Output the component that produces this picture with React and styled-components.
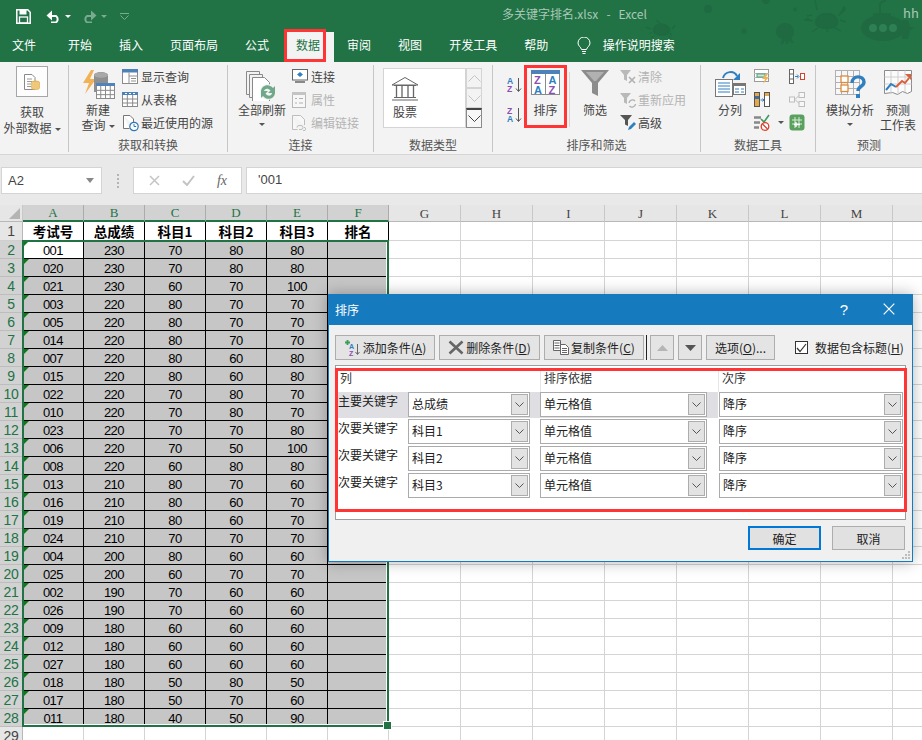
import React from "react";
import styled, { createGlobalStyle } from "styled-components";

const GREEN = "#217346";
const CJK = '"Noto Sans CJK SC", "Liberation Sans", sans-serif';

const Global = createGlobalStyle`
  html, body { margin: 0; padding: 0; background: #fff; }
  body { width: 922px; height: 740px; overflow: hidden; font-family: ${CJK}; font-size: 12px; color: #444; }
  * { box-sizing: border-box; }
`;

const Page = styled.div`position: relative; width: 922px; height: 740px; overflow: hidden;`;

/* ---------- header ---------- */
const Header = styled.header`position: relative; background: ${GREEN}; height: 62px; overflow: hidden;`;
const Critters = styled.svg`position: absolute; left: 640px; top: 0; pointer-events: none;`;
const TitleRow = styled.div`position: relative; height: 32px; display: flex; align-items: center; padding-left: 16px;`;
const QuickIcon = styled.svg`display: block; flex: none; margin-right: ${p => p.$mr || 0}px; opacity: ${p => p.$faded ? 0.4 : 1};`;
const DocTitle = styled.div`
  position: absolute; left: 502px; top: 6px; color: #a9c8b6; font-size: 12px; line-height: 16px; white-space: pre;
`;
const UserName = styled.div`position: absolute; left: 903px; top: 5px; color: #a9c8b6; font-size: 13px; line-height: 16px;`;
const TabRow = styled.nav`position: relative; height: 30px; display: flex; padding-left: 5px;`;
const Tab = styled.div`
  padding: 4px 13.5px 0; height: 30px; line-height: 18px; font-size: 12px; color: #fff; white-space: nowrap;
  flex: none;
  ${p => p.$first && "margin-left: -6.5px; margin-right: 5px; padding-left: 13.5px;"}
  ${p => p.$active && `background: #f3f3f3; color: ${GREEN}; margin-left: 4.5px; padding-left: 9px;`}
`;
const SearchTab = styled(Tab)`padding: 4px 0 0;`;
const Bulb = styled.svg`flex: none; margin: 5px 12px 0 15px;`;

/* ---------- ribbon ---------- */
const Ribbon = styled.section`
  display: flex; height: 93px; padding: 3px 0 2px; background: #f3f3f3; border-bottom: 1px solid #d6d6d6;
`;
const Group = styled.div`
  flex: none; width: ${p => p.$w}px; height: 87px; display: flex; flex-direction: column;
  border-right: ${p => p.$last ? "none" : "1px solid #c6c6c6"};
`;
const GroupBody = styled.div`flex: 1; display: flex; min-height: 0; padding-left: ${p => p.$pl || 0}px;`;
const GroupLabel = styled.div`height: 15px; line-height: 15px; font-size: 12px; text-align: center; color: #555;`;
const Big = styled.div`
  flex: none; width: ${p => p.$w}px; margin-left: ${p => p.$ml || 0}px; padding-top: 5px;
  display: flex; flex-direction: column; align-items: center;
`;
const BigIcon = styled.div`height: ${p => p.$h || 32}px; display: flex; justify-content: center; align-items: flex-start;`;
const BigText = styled.div`line-height: ${p => p.$lh || 15}px; margin-top: ${p => p.$mt || 0}px; font-size: 12px; text-align: center; white-space: nowrap; color: #444;`;
const ImportBox = styled.div`
  width: 32px; height: 31px; margin-top: -4px; margin-bottom: 2px; background: #fdfdfd; border: 1px solid #a6a6a6;
  display: flex; align-items: center; justify-content: center;
`;
const Stack = styled.div`flex: none; margin-left: ${p => p.$ml || 0}px; width: ${p => p.$w ? p.$w + "px" : "auto"}; display: flex; flex-direction: column;`;
const Small = styled.div`
  height: 23px; display: flex; align-items: center; gap: ${p => p.$gap ?? 3}px; font-size: 12px; white-space: nowrap;
  color: ${p => p.$off ? "#b3b3b3" : "#444"};
`;
const Caret = styled.span`
  display: inline-block; width: 0; height: 0; border: 3px solid transparent; border-top: 3px solid ${p => p.$c || "#555"}; border-bottom: 0;
  margin-left: ${p => p.$ml ?? 3}px; margin-right: ${p => p.$mr || 0}px; vertical-align: middle;
`;
const NameCaret = styled.span`display: block; width: 0; height: 0; border-style: solid; border-width: 5px 4px 0; border-color: #888 transparent transparent;`;
const CaretLine = styled.div`height: 15px; display: flex; align-items: center; justify-content: center;`;
const Gallery = styled.div`
  flex: none; width: 83px; height: 60px; margin-top: 3px; background: #fff; border: 1px solid #d4d4d4;
  padding: 8px 0 0 7px; display: flex; flex-direction: column; color: #444; line-height: 16px;
`;
const GalleryText = styled.span`margin: 3px 0 0 2px;`;
const ScrollCol = styled.div`flex: none; width: 16px; height: 60px; margin-top: 3px; display: flex; flex-direction: column; gap: 0;`;
const ScrollBtn = styled.div`
  flex: none; height: 20px; border: 1px solid ${p => p.$dark ? "#8a8a8a" : "#d4d4d4"};
  display: flex; align-items: center; justify-content: center; background: ${p => p.$dark ? "#f7f7f7" : "#f3f3f3"};
  ${p => p.$dark && "border-top: 2px solid #444;"}
`;
const SortStack = styled.div`flex: none; width: 20px; padding-top: 4px; display: flex; flex-direction: column;`;
const SortItem = styled.div`height: 30px; display: flex; align-items: center; justify-content: center;`;
const VSep = styled.div`flex: none; width: 1px; height: 55px; margin: 7px 5px 0 2px; background: #d6d6d6;`;
const IconRow = styled.div`height: 23px; display: flex; align-items: center;`;

/* ---------- formula bar ---------- */
const FormulaBar = styled.section`height: 50px; background: #e9e9e9; padding: 12px 0 0 1px; display: flex; align-items: flex-start;`;
const NameBox = styled.div`
  flex: none; width: 101px; height: 27px; background: #fff; border: 1px solid #d4d4d4; display: flex; align-items: center;
  justify-content: space-between; padding: 0 7px 0 6px; font: 13px "Liberation Sans", sans-serif; color: #444;
`;
const Dots = styled.div`flex: none; width: 31px; height: 27px; display: flex; flex-direction: column; align-items: center; justify-content: center; gap: 2px;`;
const Dot = styled.i`display: block; width: 2px; height: 2px; background: #b4b4b4;`;
const FxBox = styled.div`
  flex: none; width: 109px; height: 27px; background: #fff; border: 1px solid #d4d4d4; margin-right: 4px;
  display: flex; align-items: center; justify-content: space-around; padding: 0 3px 0 4px; color: #bdbdbd;
`;
const FxLabel = styled.span`font: italic 14px "Liberation Serif", serif; color: #666;`;
const FormulaInput = styled.div`
  flex: 1; height: 27px; background: #fff; border: 1px solid #d4d4d4; border-right: 0; padding-left: 11px;
  font: 13px/24px "Liberation Sans", sans-serif; color: #444;
`;

/* ---------- sheet ---------- */
const Sheet = styled.section`
  position: relative; height: 535px; overflow: hidden; display: grid;
  grid-template-columns: 23px repeat(6, 61px) repeat(8, 72px);
  grid-template-rows: 17px 19px repeat(28, 18px);
`;
const Corner = styled.div`background: #e6e6e6; border-right: 1px solid #c8c8c8; border-bottom: 1px solid #b8b8b8; position: relative; overflow: hidden;`;
const CornerMark = styled.svg`display: block; position: absolute; right: 2px; bottom: 2px;`;
const ColHead = styled.div`
  display: flex; align-items: center; justify-content: center; font: 13px "Liberation Serif", serif; padding-top: 1px;
  background: ${p => p.$sel ? "#d2d2d2" : "#e6e6e6"}; color: ${p => p.$sel ? GREEN : "#444"};
  border-right: 1px solid ${p => p.$sel ? "#ababab" : "#c8c8c8"};
  border-bottom: ${p => p.$sel ? `2px solid ${GREEN}` : "1px solid #b8b8b8"};
`;
const RowHead = styled.div`
  display: flex; align-items: center; justify-content: center; font: 14px "Liberation Sans", sans-serif; letter-spacing: -0.3px;
  background: ${p => p.$sel ? "#d2d2d2" : "#e6e6e6"}; color: ${p => p.$sel ? GREEN : "#444"};
  border-right: 1px solid #b8b8b8; border-bottom: 1px solid ${p => p.$sel ? "#bdbdbd" : "#cfcfcf"};
`;
const TitleCell = styled.div`
  background: #fff; color: #000; border-right: 1px solid #000; border-bottom: 1px solid #000;
  display: flex; align-items: center; justify-content: center; font-size: 13.5px; font-weight: 700; overflow: hidden;
`;
const DataCell = styled.div`
  position: relative; background: ${p => p.$active ? "#fff" : "#c6c6c6"}; color: #000;
  border-right: 1px solid #000; border-bottom: 1px solid #000; padding-top: 1px;
  display: flex; align-items: center; justify-content: center;
  font: 13px "Liberation Sans", sans-serif; letter-spacing: -0.5px;
  ${p => p.$flag && `&::before { content: ""; position: absolute; left: 0; top: 0; border-style: solid; border-width: 6px 6px 0 0; border-color: #0d7a1a transparent transparent transparent; }`}
`;
const EmptyCell = styled.div`background: #fff; border-right: 1px solid #d4d4d4; border-bottom: 1px solid #d4d4d4;`;
const Selection = styled.div`
  position: absolute; left: 22px; top: 35px; width: 367px; height: 487px; border: 2px solid ${GREEN};
  box-shadow: inset -1px 0 0 #fff, inset 0 -1px 0 #fff;
  pointer-events: none;
  &::after { content: ""; position: absolute; right: -5px; bottom: -5px; width: 7px; height: 7px; background: ${GREEN}; border: 1px solid #fff; }
`;

/* ---------- dialog ---------- */
const Dialog = styled.div`
  position: absolute; left: 328px; top: 294px; width: 585px; height: 268px; background: #f0f0f0;
  border: 1px solid #167abf; box-shadow: 0 0 14px rgba(0,0,0,.3); display: flex; flex-direction: column; color: #222;
`;
const DialogTitle = styled.div`
  flex: none; height: 30px; background: #167abf; color: #fff; display: flex; align-items: center; padding: 0 17px 2px 6px; font-size: 12px;
`;
const TitleText = styled.span`flex: 1;`;
const HelpMark = styled.span`font: 15px "Liberation Sans", sans-serif; margin-right: 35px;`;
const Toolbar = styled.div`flex: none; display: flex; align-items: center; margin: 10px 0 0 6px; height: 25px;`;
const ToolBtn = styled.div`
  flex: none; width: ${p => p.$w}px; height: 25px; margin-right: ${p => p.$mr ?? 4}px; border: 1px solid #adadad; background: #e4e4e4;
  display: flex; align-items: center; justify-content: center; gap: 2px; font-size: 12px; color: #222; white-space: nowrap;
  u { text-underline-offset: 1px; }
`;
const ToolDivider = styled.div`flex: none; width: 1px; height: 25px; background: #222; margin: 0 3px 0 -2px;`;
const CheckBox = styled.div`
  flex: none; width: 13px; height: 13px; margin: 0 7px 0 20px; background: #fff; border: 1px solid #333; display: flex; align-items: center; justify-content: center;
`;
const CheckLabel = styled.div`font-size: 12px; color: #222; white-space: nowrap; u { text-underline-offset: 1px; }`;
const ListBox = styled.div`
  flex: none; width: 571px; height: 155px; margin: 5px 0 0 6px; background: #fff; border: 1px solid #9a9ea2; display: flex; flex-direction: column;
`;
const ListHead = styled.div`flex: none; height: 26px; display: grid; grid-template-columns: 204px 178px 1fr; padding-top: 2px;`;
const HeadCell = styled.div`
  padding-left: ${p => p.$pl || 3}px; line-height: 20px; font-size: 12px; color: #333;
  border-left: ${p => p.$line ? "1px solid #e6e6e6" : "none"};
`;
const ListRow = styled.div`flex: none; height: 27px; display: flex;`;
const RowMain = styled.div`flex: none; width: 382px; height: 26px; display: flex; background: ${p => p.$sel ? "#dfdfe3" : "transparent"};`;
const KeyLabel = styled.div`flex: none; width: 72px; padding-left: 2px; line-height: 18px; font-size: 12px; color: #222; white-space: nowrap;`;
const Combo = styled.div`
  flex: none; width: ${p => p.$w}px; height: 25px; margin-left: ${p => p.$ml || 0}px; background: #fff; border: 1px solid #ababab;
  display: flex; align-items: center; justify-content: space-between; padding: 1px 1px 1px 3px; font-size: 12px; color: #222;
`;
const ComboText = styled.span`margin-bottom: 3px;`;
const ComboBtn = styled.div`
  flex: none; width: 17px; height: 21px; border: 1px solid #adadad; background: #e3e3e3; display: flex; align-items: center; justify-content: center;
`;
const Footer = styled.div`flex: none; display: flex; justify-content: flex-end; gap: 11px; margin-top: 6px; padding-right: 7px;`;
const FootBtn = styled.div`
  width: ${p => p.$w}px; height: 24px; background: #e1e1e1; border: ${p => p.$primary ? "2px solid #0078d7" : "1px solid #adadad"};
  display: flex; align-items: center; justify-content: center; font-size: 12px; color: #222;
`;
const Grip = styled.svg`position: absolute; right: 1px; bottom: 1px;`;
const RedBox = styled.div`
  position: absolute; left: ${p => p.$x}px; top: ${p => p.$y}px; width: ${p => p.$w}px; height: ${p => p.$h}px;
  border: 3px solid #ff3535; pointer-events: none;
`;
const RawIcon = styled.svg`display: block; flex: none;`;

/* ---------- icons ---------- */
const Svg = ({ w = 16, h = 16, children }) => <RawIcon width={w} height={h} viewBox={`0 0 ${w} ${h}`}>{children}</RawIcon>;

const MiniTable = ({ x = 0, y = 0, w = 16, h = 14, c = 4, r = 3, head = "#4d82b8", grid = "#8a8a8a" }) => {
  const lines = [];
  for (let i = 1; i < c; i++) lines.push(<path key={"c" + i} d={`M${x + (w * i) / c} ${y + 3}V${y + h}`} stroke={grid} fill="none" />);
  for (let i = 1; i < r; i++) lines.push(<path key={"r" + i} d={`M${x} ${y + 3 + ((h - 3) * i) / r}H${x + w}`} stroke={grid} fill="none" />);
  return (
    <g>
      <rect x={x + 0.5} y={y + 0.5} width={w - 1} height={h - 1} fill="#fff" stroke={grid} />
      {lines}
      <rect x={x} y={y} width={w} height={3} fill={head} />
    </g>
  );
};

const ImportIcon = () => (
  <Svg w={18} h={18}>
    <path d="M1.5 1.5H9l3 3V16.5H1.5Z" fill="#fff" stroke="#8a8a8a" />
    <path d="M4 6h5M4 8.5h5M4 11h4M4 13.5h4" stroke="#9a9a9a" />
    <ellipse cx="12.5" cy="9" rx="4" ry="1.6" fill="#e2b560" />
    <path d="M8.5 9v6c0 1 1.8 1.6 4 1.6s4-.6 4-1.6V9" fill="#f0c879" stroke="#d9a94a" strokeWidth=".6" />
  </Svg>
);
const NewQueryIcon = () => (
  <Svg w={33} h={32}>
    <path d="M9 0 1 13h6l-4 11L14 9H8l4-9Z" fill="#f2b155" />
    <path d="M12 6c0-3 4-4 7-4s7 1 7 4v16H12Z" fill="#8f8f8f" />
    <ellipse cx="19" cy="5" rx="7" ry="2.7" fill="#a8a8a8" />
    <MiniTable x={14} y={13} w={19} h={16} c={4} r={3} head="#4f84ba" />
  </Svg>
);
const QueryIcon = () => (
  <Svg w={16} h={15}><rect x=".5" y=".5" width="15" height="14" fill="#fff" stroke="#8a8a8a" /><rect width="16" height="3.5" fill="#4d82b8" /><path d="M7 3.5V15M7 7h9M9 9.5h5M9 12h5" stroke="#8f8f8f" fill="none" /></Svg>
);
const TableIcon = () => (
  <Svg w={16} h={15}><MiniTable w={16} h={15} c={3} r={3} /><path d="M3 1.5h2M7 1.5h2M11 1.5h2" stroke="#fff" /></Svg>
);
const RecentIcon = () => (
  <Svg w={18} h={18}>
    <path d="M1.5 1.5H8l3.5 3.5v6M1.5 1.5v13h6" fill="#fff" stroke="#777" />
    <circle cx="12" cy="12.5" r="4.2" fill="#fff" stroke="#2d76b5" strokeWidth="1.2" />
    <path d="M12 10v2.5h2.2" stroke="#2d76b5" fill="none" />
  </Svg>
);
const RefreshIcon = () => (
  <Svg w={34} h={31}>
    <path d="M1.5 1.5h13v23h-13z" fill="#f3f3f3" stroke="#8a8a8a" />
    <path d="M4.5 4.5h13v23h-13z" fill="#f3f3f3" stroke="#8a8a8a" />
    <path d="M7.5 7.5h12l5 5v19h-17z" fill="#fff" stroke="#8a8a8a" />
    <circle cx="23" cy="22" r="8" fill="#f3f3f3" />
    <path d="M16 21c.5-6 8-8 12-3l2-2v7h-7l2.500-2.500C23 17.500 19.500 18.500 19 21ZM30 23c-.5 6-8 8-12 3l-2 2v-7h7l-2.500 2.500C23 27 26.500 26 27 23Z" fill="#6fa98a" />
  </Svg>
);
const ConnIcon = () => (
  <Svg w={16} h={15}>
    <rect x=".5" y=".5" width="15" height="10.500" fill="#fff" stroke="#666" />
    <path d="M8 3l3 2.500L8 8 5 5.500Z" fill="#2f7fc1" />
    <path d="M3 13h10" stroke="#666" strokeWidth="1.500" />
  </Svg>
);
const PropIcon = () => (
  <Svg w={14} h={16}><rect x=".5" y=".5" width="13" height="15" fill="#f7f7f7" stroke="#b8b8b8" /><rect width="14" height="3" fill="#c4c4c4" /><path d="M3 6.500h2M3 11h2M7 6.500h4M7 11h4" stroke="#b0b0b0" fill="none" /></Svg>
);
const LinkIcon = () => (
  <Svg w={14} h={16}><path d="M.5.5h8l4 4V10M.5.5v14h5" fill="#f7f7f7" stroke="#bdbdbd" /><path d="M5 12.500a2 2 0 0 1 2-2h2a2 2 0 0 1 0 4H7M12 12.500h1a2 2 0 0 1 0 3h-2" stroke="#bdbdbd" fill="none" /></Svg>
);
const BankIcon = () => (
  <Svg w={28} h={24}>
    <path d="M14 .500 27 8H1Z" fill="none" stroke="#666" />
    <path d="M3 8.500h22M3 20.500h22M1 23h26" stroke="#666" strokeWidth="1.200" />
    <path d="M5.500 9v11M11 9v11M17 9v11M22.500 9v11" stroke="#666" strokeWidth="1.300" />
  </Svg>
);
const Chev = ({ up, c = "#c4c4c4" }) => (
  <RawIcon width="13" height="7" viewBox="0 0 13 7">
    <path d={up ? "M.5 6.500 6.500.5l6 6" : "M.5.500l6 6 6-6"} fill="none" stroke={c} />
  </RawIcon>
);
const SortAZ = ({ flip }) => (
  <Svg w={15} h={17}>
    <text x="0" y="7.500" fontFamily="Liberation Sans" fontWeight="700" fontSize="8.500" fill={flip ? "#8a4db0" : "#2f7fc1"}>{flip ? "Z" : "A"}</text>
    <text x="0" y="16" fontFamily="Liberation Sans" fontWeight="700" fontSize="8.500" fill={flip ? "#2f7fc1" : "#8a4db0"}>{flip ? "A" : "Z"}</text>
    <path d="M11.500 2v13M9 12.500l2.500 3 2.500-3" stroke="#555" fill="none" />
  </Svg>
);
const SortBigIcon = () => (
  <Svg w={29} h={25}>
    <rect x=".5" y=".5" width="28" height="24" fill="#fff" stroke="#8a8a8a" />
    <rect width="29" height="4" fill="#4d82b8" />
    <path d="M14.500 4v21" stroke="#8a8a8a" />
    <text x="3" y="14" fontFamily="Liberation Sans" fontWeight="700" fontSize="11" fill="#8a4db0">Z</text>
    <text x="3" y="23.500" fontFamily="Liberation Sans" fontWeight="700" fontSize="11" fill="#2f7fc1">A</text>
    <text x="17.500" y="14" fontFamily="Liberation Sans" fontWeight="700" fontSize="11" fill="#2f7fc1">A</text>
    <text x="17.500" y="23.500" fontFamily="Liberation Sans" fontWeight="700" fontSize="11" fill="#8a4db0">Z</text>
  </Svg>
);
const FunnelBig = () => (
  <Svg w={28} h={27}>
    <path d="M0 0h28L17 13v13l-6-3V13Z" fill="#8c8c8c" />
    <path d="M5 2h18l-8 9h-2Z" fill="#d0d0d0" opacity=".55" />
  </Svg>
);
const ClearIcon = () => (
  <Svg w={17} h={16}><path d="M0 1h11L7 6v6L4 10.500V6Z" fill="#b9b9b9" /><path d="M9 8l6 6M15 8l-6 6" stroke="#b0b0b0" strokeWidth="1.600" /></Svg>
);
const ReapplyIcon = () => (
  <Svg w={17} h={16}><path d="M0 1h11L7 6v6L4 10.500V6Z" fill="#b9b9b9" /><path d="M9 11a3.500 3.500 0 0 1 6-2M15.500 12a3.500 3.500 0 0 1-6 2" stroke="#b0b0b0" strokeWidth="1.400" fill="none" /></Svg>
);
const AdvancedIcon = () => (
  <Svg w={17} h={17}><path d="M0 1h12L8 6v6L5 10.500V6Z" fill="#555" /><path d="M8 16l1-3 5-5 2 2-5 5Z" fill="#2f7fc1" /></Svg>
);
const SplitIcon = () => (
  <Svg w={31} h={27}>
    <path d="M8 8c2-7 11-8 14-2" fill="none" stroke="#2f7fc1" strokeWidth="2" />
    <path d="M25 3v7h-7Z" fill="#2f7fc1" />
    <rect x=".5" y="9.500" width="17" height="17" fill="#fff" stroke="#777" />
    <path d="M3 13h12M3 16h12M3 19h12M3 22h12" stroke="#2f7fc1" />
    <rect x="18.500" y="13.500" width="12" height="11" fill="#fff" stroke="#777" />
    <rect x="18.500" y="13.500" width="12" height="2.500" fill="#777" />
    <path d="M20 19h4M26 19h3M20 22h4M26 22h3" stroke="#2f7fc1" />
  </Svg>
);
const FlashIcon = () => (
  <Svg w={16} h={15}><rect x=".5" y=".5" width="14" height="12" fill="#fff" stroke="#9a9a9a" /><path d="M0 4.500h15M0 8.500h15" stroke="#b5b5b5" /><rect x="3" y="5" width="8" height="3" fill="#cfe6d8" stroke="#55a07a" /><path d="M12 5 8 10h3l-2 5 6-7h-3l2-3Z" fill="#f2b155" /></Svg>
);
const DupIcon = () => (
  <Svg w={16} h={15}><rect x=".5" y=".5" width="5" height="14" fill="#e4a94a" stroke="#555" /><rect x="10.500" y=".5" width="5" height="14" fill="#fff" stroke="#555" /><rect x="1" y="4" width="4" height="3" fill="#3f6ea0" /><rect x="11" y="1" width="4" height="3" fill="#e4a94a" /><path d="M6.500 8h3M8.500 6.500 10 8l-1.500 1.500" stroke="#2f7fc1" fill="none" /></Svg>
);
const ValidIcon = () => (
  <Svg w={16} h={17}>
    <path d="M0 3.500h7M0 8.500h6M0 13.500h5" stroke="#888" strokeWidth="2.500" fill="none" />
    <path d="M7 5l3 3 5-7" stroke="#3f9a5e" strokeWidth="1.600" fill="none" />
    <circle cx="11" cy="12.500" r="3.800" fill="#fff" stroke="#d9412d" strokeWidth="1.300" />
    <path d="M8.500 10l5 5" stroke="#d9412d" strokeWidth="1.200" />
  </Svg>
);
const ConsolIcon = () => (
  <Svg w={16} h={15}>
    <rect x=".5" y=".5" width="4" height="14" fill="#fff" stroke="#666" />
    <path d="M0 5h5M0 10h5" stroke="#666" />
    <path d="M6 7.500h3" stroke="#2f7fc1" /><path d="M8 5.500 10 7.500 8 9.500" stroke="#2f7fc1" fill="none" />
    <rect x="11.500" y="4.500" width="4" height="6" fill="#fff" stroke="#d9412d" />
  </Svg>
);
const RelIcon = () => (
  <Svg w={16} h={15}>
    <g fill="#f7f7f7" stroke="#bdbdbd"><rect x=".5" y="5" width="5" height="5" /><rect x="10" y=".5" width="5.500" height="5" /><rect x="10" y="9.500" width="5.500" height="5" /></g>
    <path d="M6 7.500l4-4M6 7.500l4 4" stroke="#bdbdbd" />
  </Svg>
);
const ModelIcon = () => (
  <Svg w={16} h={17}>
    <rect x=".5" y=".5" width="15" height="16" rx="3" fill="#5aa05f" />
    <path d="M3 6h10M3 10h10M6 3v11M10 3v11" stroke="#d8ecd8" />
    <path d="M7 8v5M5 10.500h6" stroke="#fff" strokeWidth="1.300" />
  </Svg>
);
const WhatIfIcon = () => (
  <Svg w={31} h={30}>
    <g stroke="#b0b0b0" fill="none">
      <rect x=".5" y=".5" width="24" height="24" fill="#f7f7f7" />
      <path d="M6.500 0v25M12.500 0v25M18.500 0v25M0 6.500h25M0 12.500h25M0 18.500h25" />
    </g>
    <rect x="6" y="6" width="7" height="6.500" fill="#fff" stroke="#dd8a3a" strokeWidth="1.300" />
    <rect x="6" y="15" width="7" height="6.500" fill="#fff" stroke="#dd8a3a" strokeWidth="1.300" />
    <path d="M17 13c0-8 12-8 12-1 0 5-6 4-6 9" fill="none" stroke="#2f7fc1" strokeWidth="3.400" />
    <rect x="21" y="24" width="4" height="4" fill="#2f7fc1" />
  </Svg>
);
const ForecastIcon = () => (
  <Svg w={28} h={27}>
    <path d="M.5.5h27v21l-4 2-5-2-5 3-5-2-8 1Z" fill="#fbfbfb" stroke="#8c8c8c" />
    <path d="M.5 7h27M.5 14h27M7 .5V24M14 .5V24M21 .5V22" stroke="#cfcfcf" fill="none" />
    <path d="M2 20l5-6 5 3" stroke="#2f7fc1" strokeWidth="2" fill="none" />
    <path d="M12 17l6-6 3 2 4-5" stroke="#d9603b" strokeWidth="2" fill="none" />
    <path d="M21 4h6v6Z" fill="#d9603b" />
  </Svg>
);
const ComboChev = () => (
  <RawIcon width="9" height="5" viewBox="0 0 9 5"><path d="M.5.5l4 4 4-4" fill="none" stroke="#555" /></RawIcon>
);

/* ---------- data ---------- */
const COLS = ["A", "B", "C", "D", "E", "F", "G", "H", "I", "J", "K", "L", "M", ""];
const TITLES = ["考试号", "总成绩", "科目1", "科目2", "科目3", "排名"];
const DATA = `001 230 70 80 80|020 230 70 80 80|021 230 60 70 100|003 220 80 70 70|005 220 80 70 70|014 220 80 70 70|007 220 80 60 80|015 220 80 60 80|022 220 70 80 70|010 220 70 80 70|023 220 70 70 80|006 220 70 50 100|008 220 60 80 80|013 210 80 70 60|016 210 80 60 70|019 210 80 60 70|024 210 70 70 70|004 200 80 60 60|025 200 60 70 70|002 190 70 60 60|026 190 70 60 60|009 180 60 60 60|012 180 60 60 60|027 180 60 60 60|018 180 50 80 50|017 180 50 70 60|011 180 40 50 90`
  .split("|").map(r => r.split(" "));
const TABS = ["开始", "插入", "页面布局", "公式", "数据", "审阅", "视图", "开发工具", "帮助"];
const KEYS = [["主要关键字", "总成绩"], ["次要关键字", "科目1"], ["次要关键字", "科目2"], ["次要关键字", "科目3"]];

const Sheet2 = () => (
  <Sheet>
    <Corner><CornerMark width="11" height="11" viewBox="0 0 11 11"><path d="M11 0V11H0Z" fill="#b4b4b4" /></CornerMark></Corner>
    {COLS.map((c, i) => <ColHead key={i} $sel={i < 6}>{c}</ColHead>)}
    <RowHead>1</RowHead>
    {TITLES.map(t => <TitleCell key={t}>{t}</TitleCell>)}
    {Array.from({ length: 8 }, (_, i) => <EmptyCell key={"e1" + i} />)}
    {DATA.map((r, ri) => (
      <React.Fragment key={ri}>
        <RowHead $sel>{ri + 2}</RowHead>
        {r.map((v, ci) => <DataCell key={ci} $active={ri === 0 && ci === 0} $flag={ci === 0}>{v}</DataCell>)}
        <DataCell />
        {Array.from({ length: 8 }, (_, i) => <EmptyCell key={i} />)}
      </React.Fragment>
    ))}
    <RowHead>29</RowHead>
    {Array.from({ length: 14 }, (_, i) => <EmptyCell key={"l" + i} />)}
    <Selection />
  </Sheet>
);

export default function App() {
  return (
    <Page>
      <Global />
      <Header>
        <Critters width="282" height="62" viewBox="0 0 282 62" fill="#1f6a40">
          <circle cx="68" cy="9" r="4" /><circle cx="155" cy="9.500" r="2" /><circle cx="104" cy="31" r="2.600" /><circle cx="126" cy="0" r="4" />
          <path d="M14 28c3-5 12-5 15 0 2 3 0 6-4 7h-6c-5-1-7-4-5-7ZM11 29l-5-2M11 32l-1 2M32 29l3-4M30 33l2 3M14 36l-3 2M28 36l3 2M21 24l-5-4" stroke="#1f6a40" strokeWidth="1.500" />
          <path d="M136 32c0-6 5-9 9-9s9 3 9 9c0 3-2 5-3 6l3 5h-3l-2-3-1 4h-2l-1-4-2 4h-2l1-5c-2-1-6-3-6-7Z" />
          <path d="M176 20c3-8 17-9 21-1 2 5-1 8-6 9h-9c-5-1-8-4-6-8ZM173 21l-8-1 3-2M172 15l-5 1M198 16l7-6-1-4M200 20l6 2M193 27l8 4M178 28l-6 4M186 28l2 4M177 10l-2-10" stroke="#1f6a40" strokeWidth="1.500" fill="#1f6a40" />
          <ellipse cx="243" cy="28" rx="22" ry="13" />
          <rect x="233" y="13" width="18" height="6" rx="2" />
          <path d="M240 13V5c0-3 4-4 6-4" stroke="#1f6a40" strokeWidth="2" fill="none" />
          <path d="M262 20l6 0 2 7 5 1-5 2-2 9h-6Z" />
          <circle cx="233" cy="28" r="4" fill="#2f7f55" /><circle cx="243" cy="28" r="4" fill="#2f7f55" /><circle cx="253" cy="28" r="4" fill="#2f7f55" />
        </Critters>
        <TitleRow>
          <QuickIcon $mr={15} width="15" height="15" viewBox="0 0 15 15"><path d="M.8.8h11l2.400 2.400v11H.8Z" fill="none" stroke="#fff" strokeWidth="1.500" /><rect x="3.500" y="1" width="7" height="4.500" fill="#fff" /><rect x="3.500" y="8" width="8" height="6" fill="none" stroke="#fff" strokeWidth="1.300" /></QuickIcon>
          <QuickIcon $mr={4} width="15" height="13" viewBox="0 0 15 13"><path d="M4 6h6a4 4 0 0 1 0 6.500H5" fill="none" stroke="#fff" strokeWidth="2" /><path d="M6 .5v10L.5 5.500Z" fill="#fff" /></QuickIcon>
          <Caret $ml={0} $mr={11} $c="#fff" />
          <QuickIcon $faded $mr={4} width="15" height="13" viewBox="0 0 15 13"><path d="M11 6H5a4 4 0 0 0 0 6.500h5" fill="none" stroke="#fff" strokeWidth="2" /><path d="M9 .5v10l5.500-5Z" fill="#fff" /></QuickIcon>
          <Caret $ml={0} $mr={13} $c="#7fa992" />
          <QuickIcon $faded width="9" height="7" viewBox="0 0 9 7"><path d="M0 .5h9M.5 2.500l4 4 4-4" fill="none" stroke="#fff" /></QuickIcon>
          <DocTitle>{"多关键字排名.xlsx   -   Excel"}</DocTitle>
          <UserName>hh</UserName>
        </TitleRow>
        <TabRow>
          <Tab $first>文件</Tab>
          {TABS.map(t => <Tab key={t} $active={t === "数据"}>{t}</Tab>)}
          <Bulb width="14" height="18" viewBox="0 0 14 18"><path d="M4.500 12.500C4 10 1 9 1 6a6 6 0 0 1 12 0c0 3-3 4-3.500 6.500ZM5 14.500h4M5.500 16.500h3" fill="none" stroke="#fff" /></Bulb>
          <SearchTab>操作说明搜索</SearchTab>
        </TabRow>
      </Header>

      <Ribbon>
        <Group $w={69}>
          <GroupBody>
            <Big $w={64}>
              <BigIcon $h={31}><ImportBox><ImportIcon /></ImportBox></BigIcon>
              <BigText $lh={16} $mt={3}>获取</BigText>
              <BigText $lh={16}>外部数据<Caret /></BigText>
            </Big>
          </GroupBody>
          <GroupLabel />
        </Group>

        <Group $w={159}>
          <GroupBody $pl={10}>
            <Big $w={38}>
              <BigIcon><NewQueryIcon /></BigIcon>
              <BigText>新建</BigText>
              <BigText>查询<Caret /></BigText>
            </Big>
            <Stack $ml={5}>
              <Small><QueryIcon />显示查询</Small>
              <Small><TableIcon />从表格</Small>
              <Small $gap={1}><RecentIcon />最近使用的源</Small>
            </Stack>
          </GroupBody>
          <GroupLabel>获取和转换</GroupLabel>
        </Group>

        <Group $w={146}>
          <GroupBody $pl={9}>
            <Big $w={50}>
              <BigIcon><RefreshIcon /></BigIcon>
              <BigText>全部刷新</BigText>
              <CaretLine><Caret $ml={0} /></CaretLine>
            </Big>
            <Stack $ml={5}>
              <Small><ConnIcon />连接</Small>
              <Small $off $gap={5}><PropIcon />属性</Small>
              <Small $off $gap={5}><LinkIcon />编辑链接</Small>
            </Stack>
          </GroupBody>
          <GroupLabel>连接</GroupLabel>
        </Group>

        <Group $w={119}>
          <GroupBody $pl={9}>
            <Gallery>
              <BankIcon />
              <GalleryText>股票</GalleryText>
            </Gallery>
            <ScrollCol>
              <ScrollBtn><Chev up /></ScrollBtn>
              <ScrollBtn><Chev /></ScrollBtn>
              <ScrollBtn $dark><Chev c="#444" /></ScrollBtn>
            </ScrollCol>
          </GroupBody>
          <GroupLabel>数据类型</GroupLabel>
        </Group>

        <Group $w={208}>
          <GroupBody $pl={11}>
            <SortStack>
              <SortItem><SortAZ /></SortItem>
              <SortItem><SortAZ flip /></SortItem>
            </SortStack>
            <Big $w={43}>
              <BigIcon><SortBigIcon /></BigIcon>
              <BigText>排序</BigText>
            </Big>
            <VSep />
            <Big $w={40}>
              <BigIcon><FunnelBig /></BigIcon>
              <BigText>筛选</BigText>
            </Big>
            <Stack $ml={5}>
              <Small $off $gap={1}><ClearIcon />清除</Small>
              <Small $off $gap={1}><ReapplyIcon />重新应用</Small>
              <Small $gap={1}><AdvancedIcon />高级</Small>
            </Stack>
          </GroupBody>
          <GroupLabel>排序和筛选</GroupLabel>
        </Group>

        <Group $w={115}>
          <GroupBody $pl={9}>
            <Big $w={40}>
              <BigIcon><SplitIcon /></BigIcon>
              <BigText>分列</BigText>
            </Big>
            <Stack $ml={4} $w={35}>
              <IconRow><FlashIcon /></IconRow>
              <IconRow><DupIcon /></IconRow>
              <IconRow><ValidIcon /><Caret $ml={8} /></IconRow>
            </Stack>
            <Stack>
              <IconRow><ConsolIcon /></IconRow>
              <IconRow><RelIcon /></IconRow>
              <IconRow><ModelIcon /></IconRow>
            </Stack>
          </GroupBody>
          <GroupLabel>数据工具</GroupLabel>
        </Group>

        <Group $w={106} $last>
          <GroupBody $pl={9}>
            <Big $w={50}>
              <BigIcon><WhatIfIcon /></BigIcon>
              <BigText>模拟分析</BigText>
              <CaretLine><Caret $ml={0} /></CaretLine>
            </Big>
            <Big $w={40} $ml={3}>
              <BigIcon><ForecastIcon /></BigIcon>
              <BigText>预测</BigText>
              <BigText>工作表</BigText>
            </Big>
          </GroupBody>
          <GroupLabel>预测</GroupLabel>
        </Group>
      </Ribbon>

      <FormulaBar>
        <NameBox>A2<NameCaret /></NameBox>
        <Dots><Dot /><Dot /><Dot /><Dot /></Dots>
        <FxBox>
          <svg width="11" height="11" viewBox="0 0 11 11"><path d="M1 1l9 9M10 1l-9 9" stroke="#c4c4c4" strokeWidth="1.500" /></svg>
          <svg width="13" height="11" viewBox="0 0 13 11"><path d="M1 6l4 4 7-9" stroke="#c4c4c4" strokeWidth="2" fill="none" /></svg>
          <FxLabel>fx</FxLabel>
        </FxBox>
        <FormulaInput>'001</FormulaInput>
      </FormulaBar>

      <Sheet2 />

      <Dialog>
        <DialogTitle>
          <TitleText>排序</TitleText>
          <HelpMark>?</HelpMark>
          <svg width="12" height="12" viewBox="0 0 12 12"><path d="M.7.700l10.600 10.600M11.300.700.7 11.300" stroke="#fff" strokeWidth="1.200" /></svg>
        </DialogTitle>
        <Toolbar>
          <ToolBtn $w={100}>
            <Svg w={17} h={17}>
              <path d="M1 3.500h5M3.500 1v5" stroke="#3f9a5e" strokeWidth="1.800" />
              <text x="5" y="10" fontFamily="Liberation Sans" fontWeight="700" fontSize="7" fill="#2f7fc1">A</text>
              <text x="5" y="16.500" fontFamily="Liberation Sans" fontWeight="700" fontSize="7" fill="#8a4db0">Z</text>
              <path d="M13.500 5v10M11.500 13l2 2.500 2-2.500" stroke="#666" fill="none" />
            </Svg>
            <span>添加条件(<u>A</u>)</span>
          </ToolBtn>
          <ToolBtn $w={101}>
            <Svg w={16} h={15}><path d="M1.500 1.500l13 12M14.500 1.500l-13 12" stroke="#666" strokeWidth="2.600" /></Svg>
            <span>删除条件(<u>D</u>)</span>
          </ToolBtn>
          <ToolBtn $w={100}>
            <Svg w={16} h={15}>
              <path d="M.5.500h7v10h-7zM1.500 3h5M1.500 5.500h5M1.500 8h5" fill="#fff" stroke="#666" />
              <path d="M7.500 4.500h5l3 3v7h-8zM9 8.500h5M9 10.500h5M9 12.500h5" fill="#fff" stroke="#666" />
            </Svg>
            <span>复制条件(<u>C</u>)</span>
          </ToolBtn>
          <ToolDivider />
          <ToolBtn $w={24}><svg width="11" height="6" viewBox="0 0 11 6"><path d="M5.500 0 11 6H0Z" fill="#b5b5b5" /></svg></ToolBtn>
          <ToolBtn $w={24}><svg width="11" height="6" viewBox="0 0 11 6"><path d="M5.500 6 11 0H0Z" fill="#555" /></svg></ToolBtn>
          <ToolBtn $w={69} $mr={0}><span>选项(<u>O</u>)...</span></ToolBtn>
          <CheckBox><svg width="11" height="10" viewBox="0 0 11 10"><path d="M1 5l3 3.500L10 1" stroke="#333" strokeWidth="1.200" fill="none" /></svg></CheckBox>
          <CheckLabel>数据包含标题(<u>H</u>)</CheckLabel>
        </Toolbar>
        <ListBox>
          <ListHead>
            <HeadCell $pl={4}>列</HeadCell>
            <HeadCell $line>排序依据</HeadCell>
            <HeadCell $line>次序</HeadCell>
          </ListHead>
          {KEYS.map(([k, v], i) => (
            <ListRow key={i}>
              <RowMain $sel={i === 0}>
                <KeyLabel>{k}</KeyLabel>
                <Combo $w={122}><ComboText>{v}</ComboText><ComboBtn><ComboChev /></ComboBtn></Combo>
                <Combo $w={167} $ml={10}><ComboText>单元格值</ComboText><ComboBtn><ComboChev /></ComboBtn></Combo>
              </RowMain>
              <Combo $w={184} $ml={1}><ComboText>降序</ComboText><ComboBtn><ComboChev /></ComboBtn></Combo>
            </ListRow>
          ))}
        </ListBox>
        <Footer>
          <FootBtn $w={73} $primary>确定</FootBtn>
          <FootBtn $w={73}>取消</FootBtn>
        </Footer>
        <Grip width="10" height="10" viewBox="0 0 10 10" fill="#bdbdbd">
          <rect x="7" y="1" width="2" height="2" /><rect x="4" y="4" width="2" height="2" /><rect x="7" y="4" width="2" height="2" />
          <rect x="1" y="7" width="2" height="2" /><rect x="4" y="7" width="2" height="2" /><rect x="7" y="7" width="2" height="2" />
        </Grip>
      </Dialog>

      <RedBox $x={284} $y={29} $w={42} $h={33} />
      <RedBox $x={524} $y={65} $w={43} $h={63} />
      <RedBox $x={335} $y={368} $w={572} $h={144} />
    </Page>
  );
}
